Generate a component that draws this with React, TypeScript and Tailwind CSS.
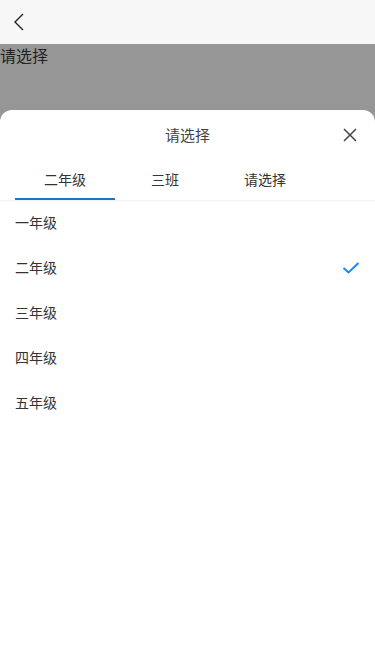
import { useState } from 'react';

const grades = ['一年级', '二年级', '三年级', '四年级', '五年级'];
const tabs = ['二年级', '三班', '请选择'];

export default function App() {
  const [selected, setSelected] = useState('二年级');
  const [tab, setTab] = useState(0);

  return (
    <div
      className="h-[667px] w-[375px] flex flex-col overflow-hidden bg-white"
      style={{ fontFamily: '"Noto Sans CJK SC", "Noto Sans", sans-serif' }}
    >
      <div className="h-[44px] bg-[#f7f7f7] flex items-center px-[12px] shrink-0">
        <svg width="14" height="20" viewBox="0 0 14 20" fill="none">
          <path d="M11 2 L3 10 L11 18" stroke="#222" strokeWidth="1.4" />
        </svg>
      </div>

      <div className="flex-1 flex flex-col bg-[#969696]">
        <div className="h-[66px] text-[16px] leading-[22px] text-[#222]">请选择</div>

        <div className="flex-1 bg-white rounded-t-[12px] flex flex-col">
          <div className="h-[50px] flex items-center justify-center relative">
            <span className="text-[15px] text-[#444]">请选择</span>
            <svg
              className="absolute right-[18px] top-[18px]"
              width="14"
              height="14"
              viewBox="0 0 14 14"
            >
              <path d="M1 1 L13 13 M13 1 L1 13" stroke="#444" strokeWidth="1.5" />
            </svg>
          </div>

          <div className="h-[40px] flex px-[15px] shadow-[0_1px_2px_rgba(0,0,0,0.06)]">
            {tabs.map((t, i) => (
              <button
                key={t}
                onClick={() => setTab(i)}
                className={
                  'w-[100px] flex items-center justify-center text-[14px] text-[#333] border-b-2 ' +
                  (tab === i ? 'border-[#1677c8]' : 'border-transparent')
                }
              >
                {t}
              </button>
            ))}
          </div>

          <div className="flex flex-col">
            {grades.map((g) => (
              <div
                key={g}
                onClick={() => setSelected(g)}
                className="h-[45px] flex items-center justify-between px-[15px] text-[14px] text-[#333]"
              >
                <span>{g}</span>
                {selected === g && (
                  <svg width="18" height="14" viewBox="0 0 18 14" fill="none">
                    <path d="M1.5 7 L6.5 11.5 L16.5 2" stroke="#1989fa" strokeWidth="2" />
                  </svg>
                )}
              </div>
            ))}
          </div>
        </div>
      </div>
    </div>
  );
}
